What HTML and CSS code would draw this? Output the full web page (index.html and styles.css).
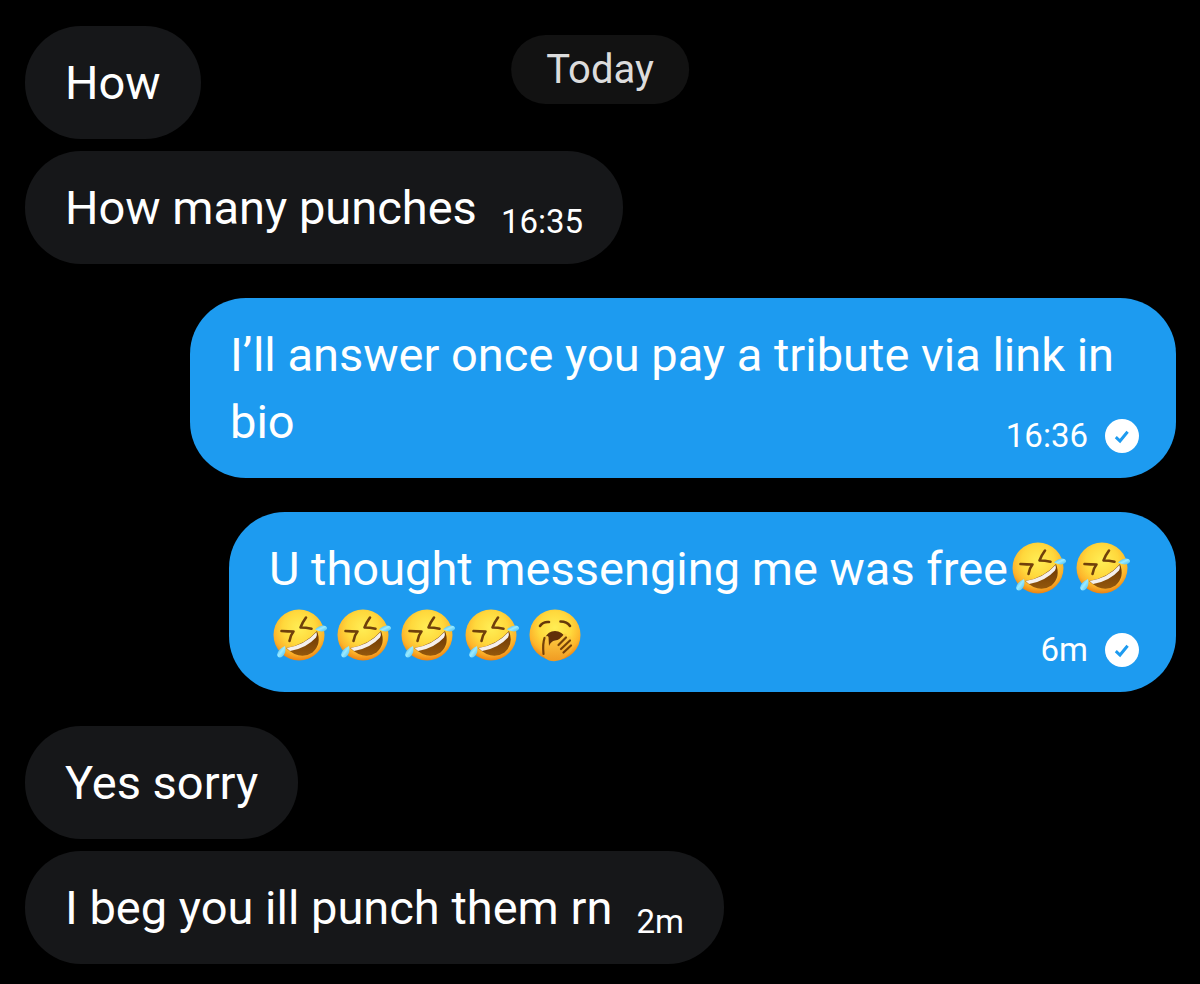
FILE: index.html
```html
<!DOCTYPE html>
<html lang="en">
<head>
<meta charset="utf-8">
<meta name="viewport" content="width=device-width, initial-scale=1">
<title>Messages</title>
<link rel="stylesheet" href="styles.css">
</head>
<body>
<svg class="sprite" aria-hidden="true">
  <defs>
    <radialGradient id="face" cx="0.5" cy="0.36" r="0.64">
      <stop offset="0" stop-color="#ffee55"/>
      <stop offset="0.5" stop-color="#ffd83c"/>
      <stop offset="0.8" stop-color="#fdb42b"/>
      <stop offset="1" stop-color="#ec8212"/>
    </radialGradient>
    <linearGradient id="mouth" x1="0" y1="0" x2="0" y2="1">
      <stop offset="0" stop-color="#6a3604"/>
      <stop offset="1" stop-color="#94580c"/>
    </linearGradient>
    <linearGradient id="tear" x1="0" y1="0" x2="1" y2="1">
      <stop offset="0" stop-color="#27a5ec"/>
      <stop offset="0.5" stop-color="#9cebff"/>
      <stop offset="1" stop-color="#3fb9f2"/>
    </linearGradient>
    <linearGradient id="hand" x1="0" y1="0" x2="0" y2="1">
      <stop offset="0" stop-color="#ffd044"/>
      <stop offset="1" stop-color="#f09a22"/>
    </linearGradient>
  </defs>
  <symbol id="rofl" viewBox="0 0 64 60">
    <circle cx="30" cy="29" r="25.500" fill="url(#face)"/>
    <path d="M12.500 25 Q19 25.500 24.500 25.500 Q21.500 29 20.500 35" fill="none" stroke="#70400b" stroke-width="2.600" stroke-linecap="round" stroke-linejoin="round"/>
    <path d="M37 11.500 Q33 17 31.500 21.500 Q37 21.500 42.500 22.800" fill="none" stroke="#70400b" stroke-width="2.600" stroke-linecap="round" stroke-linejoin="round"/>
    <path d="M17 42 Q36 39 48 25 Q53 38 43.500 46.500 Q31 55 17 42Z" fill="url(#mouth)"/>
    <path d="M17.500 42 Q36 39 47.500 26 Q48.500 29 47 31.500 Q37 42.500 21 45Z" fill="#f5f0ed"/>
    <path d="M46 23.500 Q50 19.500 54.500 19.500 Q58.500 20 58 23 Q55 27.500 46 23.500Z" fill="url(#tear)"/>
    <path d="M16 40 Q17.500 46 14 50 Q9.500 53.500 8 49 Q9 43 16 40Z" fill="url(#tear)"/>
  </symbol>
  <symbol id="yawn" viewBox="0 0 64 60">
    <circle cx="30" cy="29" r="25.500" fill="url(#face)"/>
    <path d="M15 20 Q18 15.500 24 16M35.500 15.500 Q42 15.500 45 20" fill="none" stroke="#65380a" stroke-width="2.600" stroke-linecap="round"/>
    <path d="M19 49 Q16 36 20 32 Q23 25 30 25 Q37 25.500 40 31 L44 45 L36 52Z" fill="#623009"/>
    <path d="M18.500 49 Q17.500 39 20 31.500 Q22 29 23.500 31 L24 40 Q26 35 30 34.500 Q35 34 39.500 27.500 Q42.500 27 41.500 30 L37 35.500 L44 30 Q47 30 46 33 L40 39.500 L46 35.500 Q49 36 47 39 L42 44 L45.500 42 Q48 43 45.500 46 L39 52 Q32 57 24 54.500 Q20 53 18.500 49Z" fill="url(#hand)"/>
    <path d="M18.500 48 Q17.500 38 19.500 32M33.500 39 L41 31.500M36 43 L45 34.500M38.500 46.500 L46 39.500" fill="none" stroke="#754108" stroke-width="2.200" stroke-linecap="round"/>
  </symbol>
  <symbol id="seen" viewBox="0 0 34 34">
    <circle cx="17" cy="17" r="17" fill="#fff"/>
    <path d="M10.800 18.200 L15 22 L22.600 12.800" fill="none" stroke="#1d9bf0" stroke-width="3"/>
  </symbol>
</svg>
<div class="date">Today</div>
<main class="thread">
  <section class="group">
    <article class="bubble"><p class="text">How</p></article>
    <article class="bubble"><p class="text">How many punches</p><time class="meta">16:35</time></article>
  </section>
  <article class="bubble sent">
    <p class="text">I’ll answer once you pay a tribute via link in bio</p>
    <div class="meta"><time>16:36</time><svg class="seen" role="img" aria-label="Seen"><use href="#seen"/></svg></div>
  </article>
  <article class="bubble sent">
    <p class="text">U thought messenging me was free<svg class="emoji"><use href="#rofl"/></svg><svg class="emoji"><use href="#rofl"/></svg><br><svg class="emoji"><use href="#rofl"/></svg><svg class="emoji"><use href="#rofl"/></svg><svg class="emoji"><use href="#rofl"/></svg><svg class="emoji"><use href="#rofl"/></svg><svg class="emoji"><use href="#yawn"/></svg></p>
    <div class="meta"><time>6m</time><svg class="seen" role="img" aria-label="Seen"><use href="#seen"/></svg></div>
  </article>
  <section class="group">
    <article class="bubble"><p class="text">Yes sorry</p></article>
    <article class="bubble"><p class="text">I beg you ill punch them rn</p><time class="meta">2m</time></article>
  </section>
</main>
</body>
</html>
```
FILE: styles.css
```css
* {
  box-sizing: border-box;
}

body {
  margin: 0;
  background: #000;
  color: #fff;
  font-family: Roboto, "Liberation Sans", sans-serif;
}

.sprite {
  position: absolute;
  width: 0;
  height: 0;
}

/* Floating day marker over the thread */
.date {
  position: absolute;
  top: 35px;
  left: 50%;
  transform: translateX(-50%);
  padding: 0 35px;
  border-radius: 35px;
  background: #121212;
  color: #dcdcdc;
  font-size: 40px;
  line-height: 69px;
}

.thread {
  display: flex;
  flex-direction: column;
  gap: 34px;
  padding: 26px 24px 20px 25px;
}

.group {
  display: flex;
  flex-direction: column;
  align-items: flex-start;
  gap: 12px;
}

.bubble {
  display: flex;
  gap: 24px;
  max-width: 986px;
  padding: 23px 40px;
  border-radius: 56px;
  background: #161719;
}

.text {
  margin: 0;
  font-size: 47px;
  line-height: 67px;
}

.meta {
  align-self: flex-end;
  font-size: 33px;
  line-height: 38px;
}

.sent {
  display: grid;
  align-self: flex-end;
  background: #1d9bf0;
}

.sent .text,
.sent .meta {
  grid-area: 1 / 1;
}

.sent .meta {
  display: flex;
  justify-self: end;
  align-items: center;
  gap: 17px;
  margin-right: -3px;
}

.seen {
  width: 34px;
  height: 34px;
}

.emoji {
  width: 64px;
  height: 60px;
  vertical-align: -14px;
}
```
